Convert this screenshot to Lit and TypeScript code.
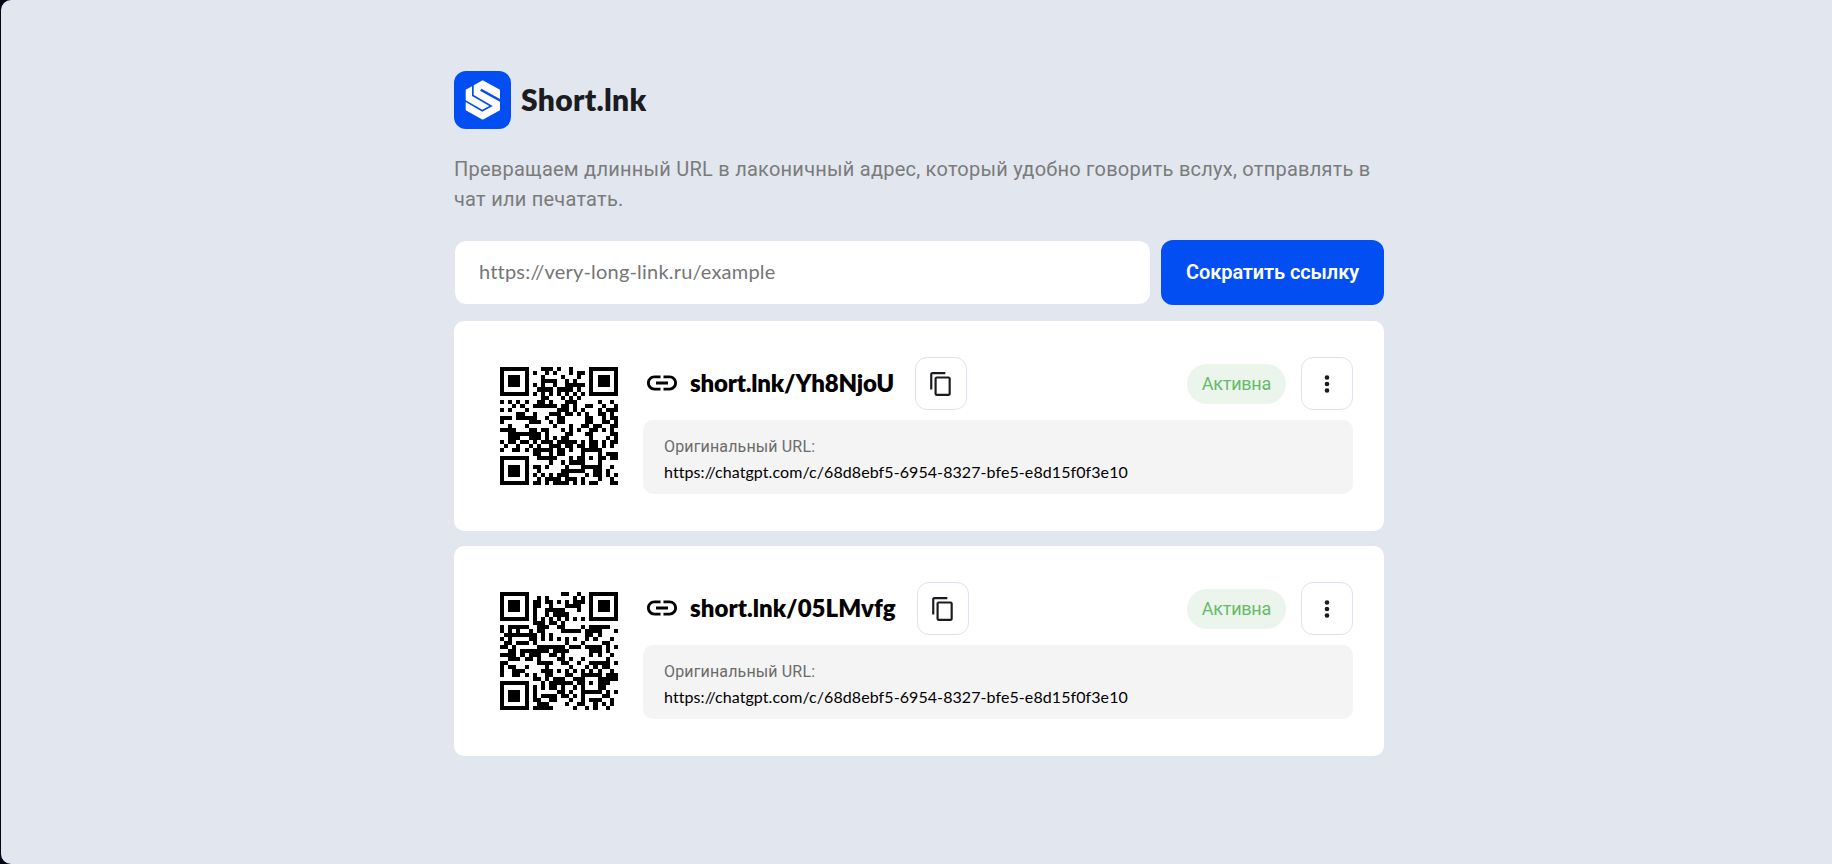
import { LitElement, html, css, svg } from "lit";
import { customElement, property } from "lit/decorators.js";

const SIZE = 29;
const DATA_WORDS = 44;
const EC_WORDS = 26;

function gfMul(a: number, b: number): number {
  let r = 0;
  for (let i = 7; i >= 0; i--) {
    r = (r << 1) ^ ((r >>> 7) * 0x11d);
    r ^= ((b >>> i) & 1) * a;
  }
  return r;
}

function errorWords(data: number[]): number[] {
  const gen = new Array(EC_WORDS).fill(0);
  gen[EC_WORDS - 1] = 1;
  let root = 1;
  for (let i = 0; i < EC_WORDS; i++) {
    for (let j = 0; j < EC_WORDS; j++) {
      gen[j] = gfMul(gen[j], root);
      if (j + 1 < EC_WORDS) gen[j] ^= gen[j + 1];
    }
    root = gfMul(root, 2);
  }
  const res = new Array(EC_WORDS).fill(0);
  for (const b of data) {
    const f = b ^ res.shift();
    res.push(0);
    gen.forEach((c, i) => (res[i] ^= gfMul(c, f)));
  }
  return res;
}

const MASKS = [
  (r: number, c: number) => (r + c) % 2 === 0,
  (r: number, _c: number) => r % 2 === 0,
  (_r: number, c: number) => c % 3 === 0,
  (r: number, c: number) => (r + c) % 3 === 0,
  (r: number, c: number) => (Math.floor(r / 2) + Math.floor(c / 3)) % 2 === 0,
  (r: number, c: number) => ((r * c) % 2) + ((r * c) % 3) === 0,
  (r: number, c: number) => (((r * c) % 2) + ((r * c) % 3)) % 2 === 0,
  (r: number, c: number) => (((r + c) % 2) + ((r * c) % 3)) % 2 === 0,
];

function build(words: number[], mask: number): boolean[][] {
  const m: boolean[][] = Array.from({ length: SIZE }, () => new Array(SIZE).fill(false));
  const used: boolean[][] = Array.from({ length: SIZE }, () => new Array(SIZE).fill(false));
  const set = (r: number, c: number, v: boolean) => {
    if (r < 0 || c < 0 || r >= SIZE || c >= SIZE) return;
    m[r][c] = v;
    used[r][c] = true;
  };
  for (let i = 0; i < SIZE; i++) {
    set(6, i, i % 2 === 0);
    set(i, 6, i % 2 === 0);
  }
  for (const [cr, cc] of [[3, 3], [3, SIZE - 4], [SIZE - 4, 3]]) {
    for (let dr = -4; dr <= 4; dr++)
      for (let dc = -4; dc <= 4; dc++) {
        const d = Math.max(Math.abs(dr), Math.abs(dc));
        set(cr + dr, cc + dc, d !== 2 && d !== 4);
      }
  }
  for (let dr = -2; dr <= 2; dr++)
    for (let dc = -2; dc <= 2; dc++) set(22 + dr, 22 + dc, Math.max(Math.abs(dr), Math.abs(dc)) !== 1);

  let rem = mask;
  for (let i = 0; i < 10; i++) rem = (rem << 1) ^ ((rem >>> 9) * 0x537);
  const bits = ((mask << 10) | rem) ^ 0x5412;
  const bit = (i: number) => ((bits >>> i) & 1) === 1;
  for (let i = 0; i <= 5; i++) set(i, 8, bit(i));
  set(7, 8, bit(6));
  set(8, 8, bit(7));
  set(8, 7, bit(8));
  for (let i = 9; i < 15; i++) set(8, 14 - i, bit(i));
  for (let i = 0; i < 8; i++) set(8, SIZE - 1 - i, bit(i));
  for (let i = 8; i < 15; i++) set(SIZE - 15 + i, 8, bit(i));
  set(SIZE - 8, 8, true);

  let n = 0;
  for (let right = SIZE - 1; right >= 1; right -= 2) {
    if (right === 6) right = 5;
    for (let v = 0; v < SIZE; v++) {
      for (let j = 0; j < 2; j++) {
        const c = right - j;
        const r = ((right + 1) & 2) === 0 ? SIZE - 1 - v : v;
        if (used[r][c]) continue;
        const b = n < words.length * 8 && ((words[n >> 3] >>> (7 - (n & 7))) & 1) === 1;
        n++;
        m[r][c] = b !== MASKS[mask](r, c);
      }
    }
  }
  return m;
}

function penalty(m: boolean[][]): number {
  let p = 0;
  let dark = 0;
  for (let axis = 0; axis < 2; axis++) {
    for (let a = 0; a < SIZE; a++) {
      let run = 0;
      let last: boolean | null = null;
      let hist = 0;
      for (let b = 0; b < SIZE; b++) {
        const v = axis ? m[b][a] : m[a][b];
        if (v === last) run++;
        else {
          if (run >= 5) p += run - 2;
          run = 1;
          last = v;
        }
        hist = ((hist << 1) & 0x7ff) | (v ? 1 : 0);
        if (b >= 10 && (hist === 0x5d0 || hist === 0x05d)) p += 40;
      }
      if (run >= 5) p += run - 2;
    }
  }
  for (let r = 0; r < SIZE; r++)
    for (let c = 0; c < SIZE; c++) {
      if (m[r][c]) dark++;
      if (r && c) {
        const s = +m[r][c] + +m[r - 1][c] + +m[r][c - 1] + +m[r - 1][c - 1];
        if (s === 0 || s === 4) p += 3;
      }
    }
  p += Math.abs(Math.ceil((dark * 100) / (SIZE * SIZE) / 5) - 10) * 10;
  return p;
}

function encode(text: string): boolean[][] {
  const bytes = [...text].map((ch) => ch.charCodeAt(0));
  let bits = "0100" + bytes.length.toString(2).padStart(8, "0");
  for (const b of bytes) bits += b.toString(2).padStart(8, "0");
  bits += "0000";
  const data: number[] = [];
  for (let i = 0; i < bits.length; i += 8) data.push(parseInt(bits.slice(i, i + 8), 2));
  for (let pad = 0xec; data.length < DATA_WORDS; pad ^= 0xec ^ 0x11) data.push(pad);
  const words = data.concat(errorWords(data));
  let best: boolean[][] = [];
  let low = Infinity;
  for (let k = 0; k < 8; k++) {
    const m = build(words, k);
    const p = penalty(m);
    if (p < low) {
      low = p;
      best = m;
    }
  }
  return best;
}

@customElement("qr-code")
class QrCode extends LitElement {
  @property() value = "";
  static styles = css`
    :host { display: block; width: 150px; height: 150px; flex: none; }
    svg { display: block; }
  `;
  render() {
    const m = encode(this.value);
    const edge = (i: number) => Math.round(((i + 4) * 150) / 37);
    let d = "";
    m.forEach((row, r) =>
      row.forEach((v, c) => {
        if (v) d += `M${edge(c)} ${edge(r)}H${edge(c + 1)}V${edge(r + 1)}H${edge(c)}z`;
      }),
    );
    return html`<svg width="150" height="150" viewBox="0 0 150 150" shape-rendering="crispEdges">${svg`<path d=${d} />`}</svg>`;
  }
}

@customElement("link-card")
class LinkCard extends LitElement {
  @property() code = "";
  @property() url = "";
  static styles = css`
    :host { display: flex; align-items: flex-start; gap: 9px; box-sizing: border-box; height: 210px; padding: 30px 31px 30px 30px; background: #fff; border-radius: 10px; }
    .body { flex: 1; display: flex; flex-direction: column; gap: 10px; padding-top: 6px; }
    .row { display: flex; align-items: center; height: 53px; }
    .link { flex: none; width: 36px; height: 36px; margin: 0 10px 1px 1px; }
    .name { margin-bottom: 1px; font: 800 24px/30px Lato, sans-serif; color: #000; white-space: nowrap; letter-spacing: var(--name-spacing, 0px); }
    button { display: grid; place-items: center; box-sizing: border-box; width: 52px; height: 53px; padding: 0; background: #fff; border: 1px solid #e0e0f0; border-radius: 12px; color: #1b1b1f; }
    .copy { margin-left: 21px; }
    .status { margin: 0 15px 0 auto; height: 40px; padding: 0 15px; border-radius: 20px; background: #ebf5ec; color: #66bb6a; font: 400 18px/40px Roboto, sans-serif; letter-spacing: -0.25px; }
    .original { box-sizing: border-box; height: 74px; padding: 14px 21px; border-radius: 10px; background: #f4f4f4; }
    .label { font: 400 16px/25px Roboto, sans-serif; color: #6b6b6b; letter-spacing: 0.15px; }
    .url { font: 400 16px/26px Lato, sans-serif; color: #000; letter-spacing: 0.08px; }
  `;
  render() {
    return html`
      <qr-code .value=${"http://localhost:4000/" + this.code}></qr-code>
      <div class="body">
        <div class="row">
          <svg class="link" viewBox="0 0 24 24"><path d="M3.9 12c0-1.71 1.39-3.1 3.1-3.1h4V7H7c-2.76 0-5 2.24-5 5s2.24 5 5 5h4v-1.900H7c-1.710 0-3.100-1.390-3.100-3.100zM8 13h8v-2H8v2zm9-6h-4v1.900h4c1.710 0 3.100 1.390 3.100 3.100s-1.390 3.100-3.100 3.100h-4V17h4c2.760 0 5-2.240 5-5s-2.240-5-5-5z" /></svg>
          <span class="name">short.lnk/${this.code}</span>
          <button class="copy" aria-label="Копировать">
            <svg width="26" height="26" viewBox="0 0 24 24" fill="currentColor"><path d="M16 1H4c-1.100 0-2 .9-2 2v14h2V3h12V1zm3 4H8c-1.100 0-2 .9-2 2v14c0 1.100.9 2 2 2h11c1.100 0 2-.9 2-2V7c0-1.100-.9-2-2-2zm0 16H8V7h11v14z" /></svg>
          </button>
          <span class="status">Активна</span>
          <button aria-label="Меню">
            <svg width="26" height="26" viewBox="0 0 26 26" fill="currentColor"><circle cx="13" cy="6.500" r="2.300" /><circle cx="13" cy="13" r="2.300" /><circle cx="13" cy="19.500" r="2.300" /></svg>
          </button>
        </div>
        <div class="original">
          <div class="label">Оригинальный URL:</div>
          <div class="url">${this.url}</div>
        </div>
      </div>
    `;
  }
}

@customElement("app-root")
class AppRoot extends LitElement {
  static styles = css`
    :host { display: block; height: 864px; background: #050518; overflow: hidden; }
    .page { box-sizing: border-box; height: 864px; margin-left: 1px; padding: 71px 448px 0 453px; background: #e1e6ef; border-radius: 10px 0 0 10px; }
    .brand { display: flex; align-items: center; gap: 10px; height: 58px; }
    .logo { display: block; width: 57px; height: 58px; }
    h1 { margin: 0 0 3px; font: 800 30px/38px Lato, sans-serif; color: #1b1c20; letter-spacing: 0.3px; }
    .lead { margin: 25px 0 26px; font: 400 20px/30px Roboto, sans-serif; letter-spacing: 0.24px; color: #7b7b7b; }
    .form { display: flex; gap: 10px; height: 65px; margin-bottom: 16px; }
    input { flex: 1; min-width: 0; box-sizing: border-box; padding: 0 24px 3px; background: #fff; border: 1px solid #e2e4f2; border-radius: 12px; font: 400 20px Lato, sans-serif; letter-spacing: 0.2px; outline: none; }
    input::placeholder { color: #757575; opacity: 1; }
    .submit { width: 223px; padding: 0 0 2px; border: 0; border-radius: 12px; background: #024ef2; color: #fff; font: 600 20px Roboto, sans-serif; letter-spacing: -0.1px; }
    .cards { display: flex; flex-direction: column; gap: 15px; }
    .first { --name-spacing: -0.2px; }
    .second { --name-spacing: 0.04px; }
  `;
  render() {
    const url = "https://chatgpt.com/c/68d8ebf5-6954-8327-bfe5-e8d15f0f3e10";
    return html`
      <main class="page">
        <div class="brand">
          <svg class="logo" viewBox="0 0 57 58">
            <rect width="57" height="58" rx="12" fill="#024ef2" />
            <path fill="#fff" d="M11.700 18.700L18 15.300V25L35.300 35L28.300 38.700L11.700 29.300zM19.700 14.300L28.700 9.300L46 18.700V28L27.500 17.800L26 19.800L46 30.700V39.300L28.700 48.700L11.700 39.300V31L28.300 40.700L38.700 35L19.700 24z" />
          </svg>
          <h1>Short.lnk</h1>
        </div>
        <p class="lead">Превращаем длинный URL в лаконичный адрес, который удобно говорить вслух, отправлять в чат или печатать.</p>
        <div class="form">
          <input placeholder="https://very-long-link.ru/example" />
          <button class="submit">Сократить ссылку</button>
        </div>
        <div class="cards">
          <link-card class="first" code="Yh8NjoU" url=${url}></link-card>
          <link-card class="second" code="05LMvfg" url=${url}></link-card>
        </div>
      </main>
    `;
  }
}
